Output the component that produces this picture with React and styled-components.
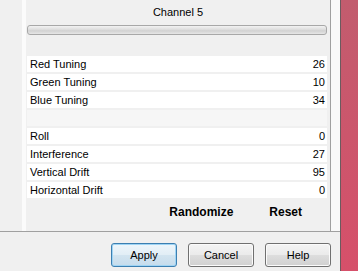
import React from "react";
import styled, { createGlobalStyle } from "styled-components";

const Global = createGlobalStyle`
  html, body { margin: 0; padding: 0; background: #f0f0f0; }
  body { font-family: "Liberation Sans", Arial, sans-serif; }
`;

const Root = styled.div`
  width: 358px;
  height: 271px;
  display: flex;
  overflow: hidden;
  background: #f0f0f0;
`;

const Main = styled.div`
  width: 340px;
  display: flex;
  flex-direction: column;
`;

const Strip = styled.div`
  flex: 1;
  border-left: 1px solid #6b5a5e;
  background: linear-gradient(180deg, #c25c6e 0%, #cc566c 50%, #d6506a 100%);
`;

const TopArea = styled.div`
  height: 231px;
  display: flex;
`;

const LeftGutter = styled.div`
  width: 22px;
  background: #f0f0f0;
`;

const Stripe = styled.div`
  width: 4px;
  background: #fbfbfb;
`;

const Panel = styled.div`
  width: 304px;
  border-right: 1px solid #a0a0a0;
  display: flex;
  flex-direction: column;
  background: #f0f0f0;
`;

const RightGutter = styled.div`
  flex: 1;
  background: #f9f9f9;
`;

const Title = styled.div`
  height: 25px;
  box-sizing: border-box;
  padding-top: 5px;
  text-align: center;
  font-size: 11px;
  line-height: 14px;
  color: #000;
`;

const Bar = styled.div`
  margin: 0 3px 0 1px;
  height: 10px;
  box-sizing: border-box;
  border: 1px solid #a8a8a8;
  border-radius: 3px;
  background: linear-gradient(180deg, #f2f2f2 0%, #e0e0e0 40%, #d2d2d2 60%, #e6e6e6 100%);
`;

const List = styled.div`
  margin: 21px 3px 0 1px;
  display: flex;
  flex-direction: column;
  gap: 2px;
`;

const Row = styled.div`
  height: 16px;
  display: flex;
  align-items: center;
  justify-content: space-between;
  padding: 0 2px 0 3px;
  background: ${(p) => (p.$blank ? "#f6f6f6" : "#ffffff")};
  font-size: 11px;
  color: #000;
`;

const Actions = styled.div`
  height: 28px;
  display: flex;
  align-items: center;
  justify-content: flex-end;
  gap: 36px;
  padding-right: 28px;
  font-size: 12px;
  font-weight: bold;
  color: #000;
`;

const Separator = styled.div`
  border-top: 1px solid #a0a0a0;
`;

const ButtonRow = styled.div`
  display: flex;
  justify-content: flex-end;
  gap: 11px;
  padding: 11px 9px 0 0;
`;

const Button = styled.button`
  width: 66px;
  height: 24px;
  box-sizing: border-box;
  border-radius: 3px;
  font-family: "Liberation Sans", Arial, sans-serif;
  font-size: 11px;
  color: #000;
  padding: 0;
  border: 1px solid ${(p) => (p.$default ? "#3c7fb1" : "#707070")};
  background: ${(p) =>
    p.$default
      ? "linear-gradient(180deg, #eef6fb 0%, #e2eef6 48%, #d2e4f0 52%, #c6dcec 100%)"
      : "linear-gradient(180deg, #f4f4f4 0%, #ebebeb 48%, #dddddd 52%, #d0d0d0 100%)"};
  box-shadow: inset 0 0 0 1px ${(p) => (p.$default ? "#9fd4f4" : "#fbfbfb")};
`;

const rows = [
  ["Red Tuning", "26"],
  ["Green Tuning", "10"],
  ["Blue Tuning", "34"],
  null,
  ["Roll", "0"],
  ["Interference", "27"],
  ["Vertical Drift", "95"],
  ["Horizontal Drift", "0"],
];

export default function App() {
  return (
    <>
      <Global />
      <Root>
        <Main>
          <TopArea>
            <LeftGutter />
            <Stripe />
            <Panel>
              <Title>Channel 5</Title>
              <Bar />
              <List>
                {rows.map((r, i) =>
                  r ? (
                    <Row key={i}>
                      <span>{r[0]}</span>
                      <span>{r[1]}</span>
                    </Row>
                  ) : (
                    <Row key={i} $blank />
                  )
                )}
              </List>
              <Actions>
                <span>Randomize</span>
                <span>Reset</span>
              </Actions>
            </Panel>
            <RightGutter />
          </TopArea>
          <Separator />
          <ButtonRow>
            <Button $default>Apply</Button>
            <Button>Cancel</Button>
            <Button>Help</Button>
          </ButtonRow>
        </Main>
        <Strip />
      </Root>
    </>
  );
}
